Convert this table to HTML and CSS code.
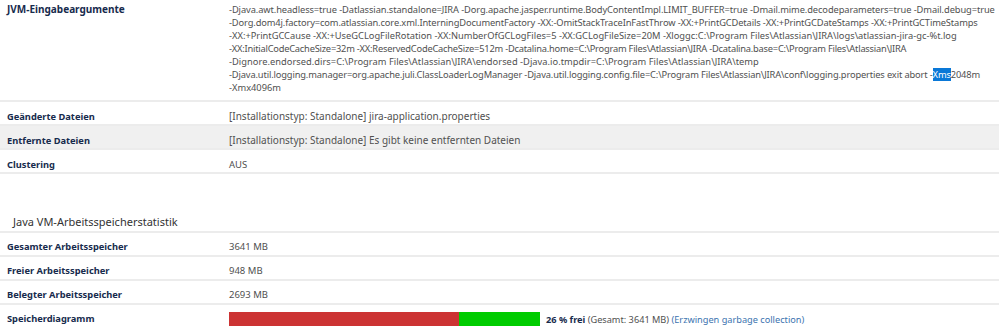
FILE: index.html
```html
<!DOCTYPE html>
<html lang="de">
<head>
<meta charset="utf-8">
<link rel="stylesheet" href="styles.css">
</head>
<body>
<div class="info">
  <div class="row row-jvm">
    <div class="label">JVM-Eingabeargumente</div>
    <div class="value args">
      <span class="ln l1">-Djava.awt.headless=true -Datlassian.standalone=JIRA -Dorg.apache.jasper.runtime.BodyContentImpl.LIMIT_BUFFER=true -Dmail.mime.decodeparameters=true -Dmail.debug=true</span>
      <span class="ln l2">-Dorg.dom4j.factory=com.atlassian.core.xml.InterningDocumentFactory -XX:-OmitStackTraceInFastThrow -XX:+PrintGCDetails -XX:+PrintGCDateStamps -XX:+PrintGCTimeStamps</span>
      <span class="ln l3">-XX:+PrintGCCause -XX:+UseGCLogFileRotation -XX:NumberOfGCLogFiles=5 -XX:GCLogFileSize=20M -Xloggc:C:\Program Files\Atlassian\JIRA\logs\atlassian-jira-gc-%t.log</span>
      <span class="ln l4">-XX:InitialCodeCacheSize=32m -XX:ReservedCodeCacheSize=512m -Dcatalina.home=C:\Program Files\Atlassian\JIRA -Dcatalina.base=C:\Program Files\Atlassian\JIRA</span>
      <span class="ln l5">-Dignore.endorsed.dirs=C:\Program Files\Atlassian\JIRA\endorsed -Djava.io.tmpdir=C:\Program Files\Atlassian\JIRA\temp</span>
      <span class="ln l6">-Djava.util.logging.manager=org.apache.juli.ClassLoaderLogManager -Djava.util.logging.config.file=C:\Program Files\Atlassian\JIRA\conf\logging.properties exit abort -<span class="sel">Xms</span>2048m</span>
      <span class="ln l7">-Xmx4096m</span>
    </div>
  </div>
  <div class="row">
    <div class="label">Geänderte Dateien</div>
    <div class="value file">[Installationstyp: Standalone] jira-application.properties</div>
  </div>
  <div class="row row-grey">
    <div class="label">Entfernte Dateien</div>
    <div class="value file">[Installationstyp: Standalone] Es gibt keine entfernten Dateien</div>
  </div>
  <div class="row">
    <div class="label">Clustering</div>
    <div class="value">AUS</div>
  </div>
</div>

<h3 class="section-title">Java VM-Arbeitsspeicherstatistik</h3>

<div class="info info-mem">
  <div class="row">
    <div class="label">Gesamter Arbeitsspeicher</div>
    <div class="value">3641 MB</div>
  </div>
  <div class="row">
    <div class="label">Freier Arbeitsspeicher</div>
    <div class="value">948 MB</div>
  </div>
  <div class="row">
    <div class="label">Belegter Arbeitsspeicher</div>
    <div class="value">2693 MB</div>
  </div>
  <div class="row row-last">
    <div class="label">Speicherdiagramm</div>
    <div class="value mem">
      <div class="bar">
        <div class="used" style="width:74%"></div>
        <div class="free" style="width:26%"></div>
      </div>
      <span class="mem-text"><strong>26 % frei</strong> (Gesamt: 3641 MB) <a href="#" class="link">(Erzwingen garbage collection)</a></span>
    </div>
  </div>
</div>
</body>
</html>
```

FILE: styles.css
```css
html, body {
  margin: 0;
  padding: 0;
  background: #ffffff;
}

body {
  font-family: "Noto Sans", "Open Sans", sans-serif;
  font-size: 10px;
  color: #505050;
}

.row {
  display: grid;
  grid-template-columns: 229px 1fr;
  border-bottom: 2px solid #ececec;
  line-height: 13px;
  padding: 8px 0 1px 0;
}

.label {
  padding-left: 7px;
  font-size: 9.3px;
  font-weight: bold;
  color: #172b4d;
}

.row-jvm .label {
  font-size: 10px;
}

.value {
  font-size: 9.5px;
}

.value.file {
  font-size: 10px;
}

.row-jvm {
  padding: 3px 0 6px 0;
}

.args {
  font-size: 9.3px;
  white-space: nowrap;
}

.ln {
  display: block;
}

.l1 { letter-spacing: -0.095px; }
.l2 { letter-spacing: -0.12px; }
.l3 { letter-spacing: 0; }
.l4 { letter-spacing: -0.22px; }
.l5 { letter-spacing: 0.03px; }
.l6 { letter-spacing: -0.14px; }

.sel {
  background: #0a78d7;
  color: #ffffff;
}

.row-grey {
  background: #f0f0f0;
}

.section-title {
  margin: 0;
  padding: 41px 0 2px 13px;
  font-size: 11px;
  font-weight: normal;
  color: #333333;
  border-bottom: 2px solid #ececec;
  line-height: 14px;
}

.info-mem .row {
  padding: 7px 0 2px 0;
}

.info-mem .row-last {
  border-bottom: none;
}

.mem {
  display: flex;
  align-items: center;
  gap: 6px;
}

.bar {
  display: flex;
  width: 311px;
  height: 14px;
}

.used {
  background: #cc3333;
}

.free {
  background: #00cc00;
}

.mem-text {
  font-size: 9.2px;
}

.mem-text strong {
  color: #172b4d;
}

.link {
  color: #3b73af;
  text-decoration: none;
}
```
